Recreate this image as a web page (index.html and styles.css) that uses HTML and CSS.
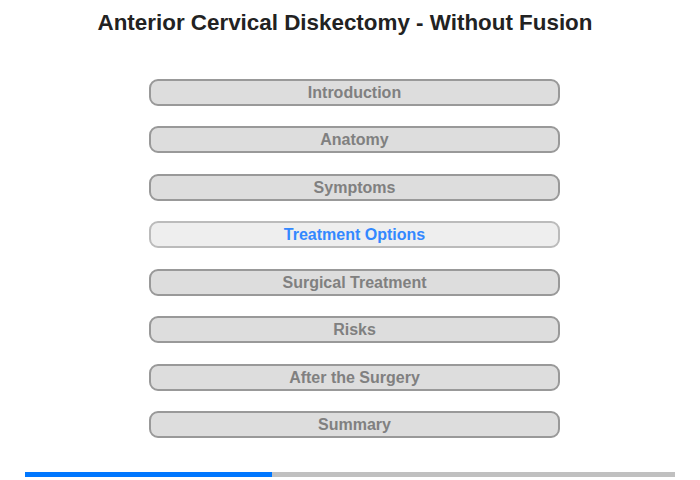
FILE: index.html
```html
<!DOCTYPE html>
<html>
<head>
<meta charset="utf-8">
<link rel="stylesheet" href="styles.css">
</head>
<body>
<div class="page">
  <h1 class="title">Anterior Cervical Diskectomy - Without Fusion</h1>
  <nav class="menu">
    <div class="item">Introduction</div>
    <div class="item">Anatomy</div>
    <div class="item">Symptoms</div>
    <div class="item active">Treatment Options</div>
    <div class="item">Surgical Treatment</div>
    <div class="item">Risks</div>
    <div class="item">After the Surgery</div>
    <div class="item">Summary</div>
  </nav>
  <div class="progress"><div class="progress-fill" style="width:247px"></div></div>
</div>
</body>
</html>
```

FILE: styles.css
```css
html, body {
  margin: 0;
  padding: 0;
  background: #fff;
}
.page {
  width: 700px;
  height: 480px;
  display: flex;
  flex-direction: column;
  font-family: "Liberation Sans", Arial, sans-serif;
}
.title {
  margin: 10px 0 0 0;
  padding-right: 10px;
  font-size: 22.4px;
  line-height: 26px;
  font-weight: bold;
  color: #222;
  text-align: center;
}
.menu {
  margin-top: 42.5px;
  margin-left: 149px;
  width: 411px;
  display: flex;
  flex-direction: column;
  gap: 20.5px;
}
.item {
  box-sizing: border-box;
  height: 27px;
  border: 2px solid #999;
  border-radius: 9px;
  background: #ddd;
  color: #808080;
  font-size: 16px;
  font-weight: bold;
  line-height: 23px;
  text-align: center;
}
.item.active {
  background: #eee;
  border-color: #bbb;
  color: #3388ff;
}
.progress {
  margin: 33.5px 0 0 25px;
  width: 650px;
  height: 5px;
  background: #c0c0c0;
}
.progress-fill {
  height: 100%;
  background: #0077ff;
}
```
